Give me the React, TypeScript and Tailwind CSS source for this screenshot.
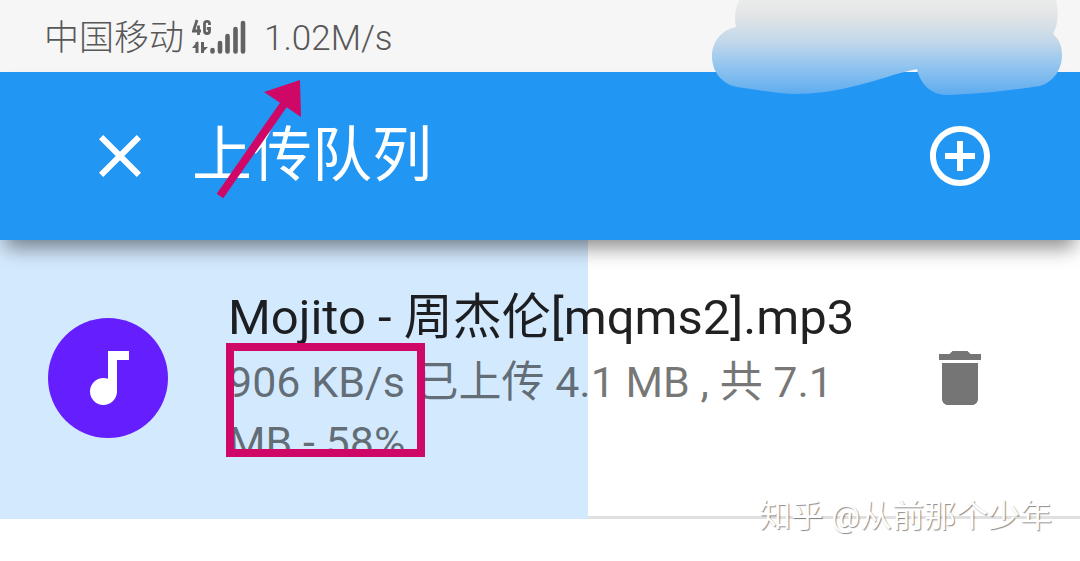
import { MdAddCircleOutline, MdAudiotrack, MdClose, MdDelete } from "react-icons/md";

const SignalIcon = () => (
    <svg width="54" height="38" viewBox="0 0 54 38" fill="none" stroke="#626262" aria-label="4G" role="img">
        <path d="M5 1L1.500 12H9M6.500 6.500V16" strokeWidth="2.8" />
        <path d="M17.500 6V4.500Q17.500 2.400 15 2.400T12.500 4.500V12Q12.500 14.500 15 14.500T17.500 12V9.500H14.800" strokeWidth="2.8" />
        <path d="M5 23V34M10.500 23V34" strokeWidth="3" />
        <path d="M6 22L0 29H6ZM10 34L16 28H10Z" fill="#626262" stroke="none" />
        <path d="M20.500 31V32.500M28 24V32.500M35.500 17V32.500M43.500 10V32.500M51 4V32.500" strokeWidth="4.600" strokeLinecap="round" />
    </svg>
);

const StatusBar = () => (
    <div className="flex h-[72px] items-center bg-[#f6f6f6] pt-1 pl-11 font-light text-[#585858]">
        <span className="pt-0.5 text-[35px] leading-10">中国移动</span>
        <span className="ml-2">
            <SignalIcon />
        </span>
        <span className="ml-[18px] pt-0.5 text-[35px] leading-10">1.02M/s</span>
    </div>
);

const Header = () => (
    <header className="relative z-10 flex h-[168px] items-center bg-[#2196f3] px-[84px] text-white shadow-[0_12px_18px_-6px_rgba(0,0,0,0.4),0_16px_20px_-4px_rgba(0,0,0,0.1)]">
        <button type="button" aria-label="关闭">
            <MdClose size={72} />
        </button>
        <h1 className="ml-9 flex-1 text-[60px] leading-[72px]">上传队列</h1>
        <button type="button" aria-label="添加">
            <MdAddCircleOutline size={72} />
        </button>
    </header>
);

const UploadItem = () => (
    <li className="relative">
        <div
            className="absolute inset-y-0 left-0 w-[54.4%] bg-[#d3e9fd]"
            role="progressbar"
            aria-label="上传进度"
            aria-valuenow={58}
        />
        <div className="flex items-center border-b-[3px] border-[#e0e0e0] py-11 pr-[84px] pl-12">
            <div className="relative flex size-[120px] shrink-0 items-center justify-center rounded-full bg-[#651fff] text-white">
                <MdAudiotrack size={72} />
            </div>
            <div className="relative ml-[60px] min-w-0 flex-1">
                <h2 className="text-[49px] leading-[68px] text-black/87">Mojito - 周杰伦[mqms2].mp3</h2>
                <p className="text-[43px] leading-[60px] text-black/54">
                    906 KB/s 已上传 4.1 MB , 共 7.1 MB - 58%
                </p>
            </div>
            <button type="button" aria-label="删除" className="relative ml-9 text-[#757575]">
                <MdDelete size={72} />
            </button>
        </div>
    </li>
);

// hand-drawn marks that sit over the screen
const Marks = () => (
    <>
        <svg className="pointer-events-none absolute top-0 right-[18px] z-20" width="350" height="96" viewBox="712 0 350 96">
            <defs>
                <linearGradient id="smudge" x1="0" y1="0" x2="0" y2="1">
                    <stop offset="0" stopColor="#ebebeb" />
                    <stop offset="0.2" stopColor="#dfe3e6" />
                    <stop offset="0.45" stopColor="#c0d7ea" />
                    <stop offset="0.7" stopColor="#91c4ef" />
                    <stop offset="1" stopColor="#5dacef" />
                </linearGradient>
            </defs>
            <path d="M904 72L917 68V72Z" fill="#f6f6f6" />
            <path
                d="M739 0Q733 14 736 27C721 30 712 42 712 56C712 72 722 84 737 87C757 90 775 93 793 94C815 94 836 91 855 86C877 81 896 73 917 69C920 85 933 96 949 95C980 94 1014 90 1040 86C1053 82 1062 70 1062 55C1062 46 1059 39 1053 34C1058 25 1059 12 1056 0Z"
                fill="url(#smudge)"
            />
        </svg>
        <svg className="pointer-events-none absolute top-20 left-[216px] z-20" width="86" height="120" viewBox="216 80 86 120">
            <path d="M220 196L284 104" stroke="#cf0868" strokeWidth="8" />
            <path d="M300 80L264 92L301 117Z" fill="#cf0868" />
        </svg>
        <div className="pointer-events-none absolute top-[343px] left-[226px] z-20 h-[114px] w-[199px] border-8 border-[#cf0868]" />
        <div className="pointer-events-none absolute top-[492px] right-7 z-20 text-[32px] leading-[48px] text-white [text-shadow:1px_1px_1px_rgba(0,0,0,0.45)]">
            知乎 @从前那个少年
        </div>
    </>
);

export default function App() {
    return (
        <div className="relative min-h-screen overflow-hidden bg-white font-[Roboto,'Noto_Sans_CJK_SC',sans-serif]">
            <StatusBar />
            <Header />
            <main>
                <ul>
                    <UploadItem />
                </ul>
            </main>
            <Marks />
        </div>
    );
}
